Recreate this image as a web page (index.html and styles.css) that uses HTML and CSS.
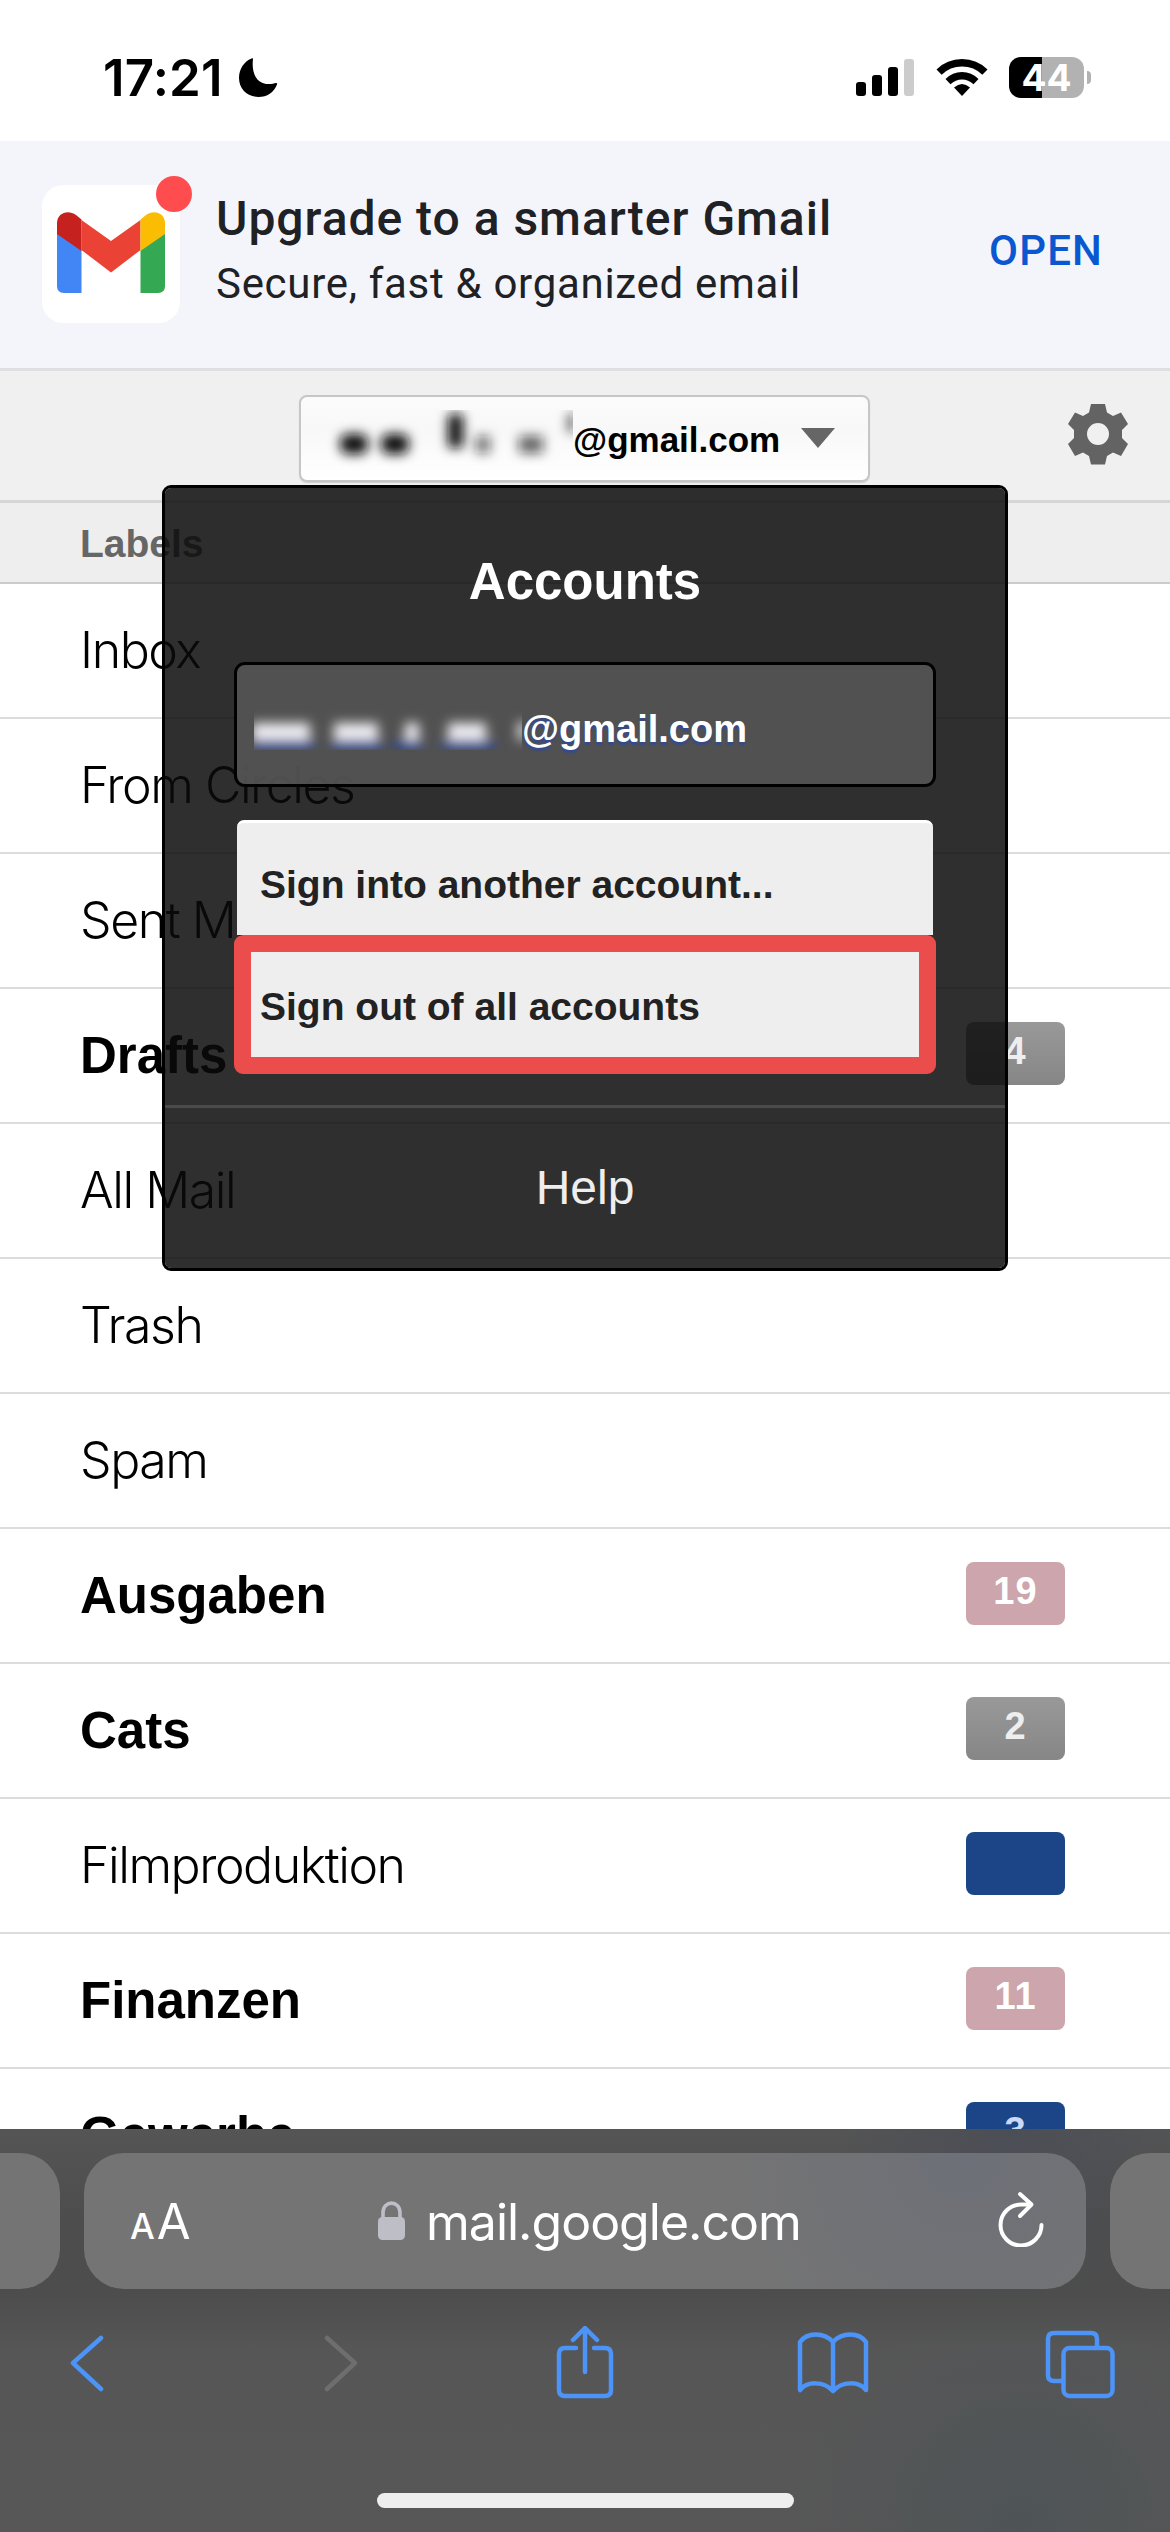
FILE: index.html
```html
<!DOCTYPE html>
<html lang="en">
<head>
<meta charset="utf-8">
<title>Gmail</title>
<link rel="stylesheet" href="styles.css">
</head>
<body>
<div class="screen">
  <header class="status">
    <span class="time">17:21</span>
    <svg class="moon" width="40" height="40" viewBox="0 0 40 40"><path d="M15 1C13.500 13 17 26 31 26C34 26 36 25.500 38 25C39 24.700 39.500 25.400 39 26.500C36 34.500 29 39 20.500 39C9 39 1 30.500 1 20C1 11 6 3.500 13.500 0.400C14.500 0 15.200 0.200 15 1Z"/></svg>
    <svg class="signal" width="58" height="38" viewBox="0 0 58 38"><rect x="0" y="23" width="10" height="14" rx="3"/><rect x="16" y="16" width="10" height="21" rx="3"/><rect x="32" y="8" width="10" height="29" rx="3"/><rect x="48" y="0" width="10" height="37" rx="3" fill="#ccc"/></svg>
    <svg class="wifi" width="52" height="38" viewBox="0 0 52 38"><path d="M26 37L18 28.500Q26 21.500 34 28.500Z"/><path d="M26 13Q35.500 13 42.500 20L37.500 25.200Q32.500 20.500 26 20.500Q19.500 20.500 14.500 25.200L9.500 20Q16.500 13 26 13Z"/><path d="M26 0Q41 0 51.500 10.500L46.300 15.700Q38 7.500 26 7.500Q14 7.500 5.700 15.700L0.500 10.500Q11 0 26 0Z"/></svg>
    <span class="battery">44</span><i class="nub"></i>
  </header>

  <section class="banner">
    <div class="app-icon">
      <svg width="108" height="82" viewBox="0 0 108 82"><path fill="#4285f4" d="M0 20L24.500 38V81H7Q0 81 0 74Z"/><path fill="#34a853" d="M83.500 38L108 20V74Q108 81 101 81H83.500Z"/><path fill="#ea4335" d="M24.500 8L54 29L83.500 8V38L54 60.500L24.500 38Z"/><path fill="#c5221f" d="M0 22V11C0 1 11-3 19 3L24.500 7.500V39Z"/><path fill="#fbbc04" d="M108 22V11C108 1 97-3 89 3L83.500 7.500V39Z"/></svg>
      <i class="dot"></i>
    </div>
    <div class="pitch">
      <div class="pitch-title">Upgrade to a smarter Gmail</div>
      <div class="pitch-sub">Secure, fast &amp; organized email</div>
    </div>
    <div class="open">OPEN</div>
  </section>

  <nav class="toolbar">
    <div class="account-button">
      <svg class="redacted" width="272" height="60" viewBox="0 0 272 60"><defs><filter id="soft" x="-50%" y="-50%" width="200%" height="200%"><feGaussianBlur stdDeviation="6"/></filter></defs><g filter="url(#soft)" fill="#111"><rect x="39" y="24" width="28" height="20" rx="8"/><rect x="80" y="24" width="28" height="20" rx="8"/><rect x="147" y="4" width="15" height="34" rx="4"/><rect x="175" y="26" width="14" height="17" opacity=".6"/><rect x="218" y="26" width="24" height="17" opacity=".65"/><rect x="267" y="4" width="8" height="18" opacity=".7"/></g></svg>
      <span class="domain">@gmail.com</span>
      <svg class="caret" width="34" height="20" viewBox="0 0 34 20"><path fill="#666" d="M0 0H34L17 20Z"/></svg>
    </div>
    <svg class="gear" width="60" height="62" viewBox="0 0 60 62"><path fill="#636363" fill-rule="evenodd" d="M23 1H37L39 9.500L45 13L53 9.500L60 21L54 27V35L60 41L53 53L45 49.500L39 53L37 61.500H23L21 53L15 49.500L7 53L0 41L6 35V27L0 21L7 9.500L15 13L21 9.500ZM30 20A11 11 0 1 0 30 42A11 11 0 1 0 30 20Z"/></svg>
  </nav>

  <main class="labels">
    <h2 class="labels-head">Labels</h2>
    <div class="row">Inbox</div>
    <div class="row">From Circles</div>
    <div class="row">Sent Mail</div>
    <div class="row unread">Drafts<b class="badge gray">4</b></div>
    <div class="row">All Mail</div>
    <div class="row">Trash</div>
    <div class="row">Spam</div>
    <div class="row unread">Ausgaben<b class="badge pink">19</b></div>
    <div class="row unread">Cats<b class="badge gray">2</b></div>
    <div class="row">Filmproduktion<b class="badge blue"></b></div>
    <div class="row unread">Finanzen<b class="badge pink">11</b></div>
    <div class="row unread">Gewerbe<b class="badge blue">3</b></div>
  </main>

  <footer class="browser">
    <div class="tabs">
      <div class="pill prev"></div>
      <div class="pill address">
        <span class="text-size"><small>A</small>A</span>
        <span class="host">
          <svg width="28" height="40" viewBox="0 0 28 40"><rect x="0" y="16" width="27" height="23" rx="4.500" fill="#bebec6"/><path d="M5 18V11.500C5 -1 22 -1 22 11.500V18" fill="none" stroke="#bebec6" stroke-width="3.600"/></svg>
          <span class="host-name">mail.google.com</span>
        </span>
        <svg class="reload" width="46" height="56" viewBox="0 0 46 56"><g fill="none" stroke="#fff" stroke-width="4" stroke-linecap="round" stroke-linejoin="round"><path d="M33 13.500H23A20.500 20.500 0 1 0 43.500 34"/><path d="M22 3L33.500 13.500L22 25"/></g></svg>
      </div>
      <div class="pill next"></div>
    </div>
    <div class="actions">
      <svg class="back" width="34" height="74" viewBox="0 0 34 74"><path d="M31 12L3 37L31 63" /></svg>
      <svg class="forward" width="34" height="74" viewBox="0 0 34 74"><path d="M3 12L31 37L3 63"/></svg>
      <svg class="share" width="58" height="74" viewBox="0 0 58 74"><path d="M20 22H9Q3 22 3 28V64Q3 70 9 70H49Q55 70 55 64V28Q55 22 49 22H38M29 46V3M17 14L29 2L41 14"/></svg>
      <svg class="book" width="74" height="74" viewBox="0 0 74 74"><path d="M37 65C28 55 11 55 4 64V16C11 6 28 6 37 16C46 6 63 6 70 16V64C63 55 46 55 37 65ZM37 16V64"/></svg>
      <svg class="windows" width="70" height="74" viewBox="0 0 70 74"><path d="M17 55H9Q3 55 3 49V13Q3 7 9 7H46Q52 7 52 13V20"/><rect x="18.500" y="22" width="49" height="48" rx="6"/></svg>
    </div>
    <div class="home"></div>
  </footer>

  <div class="popup">
    <h1>Accounts</h1>
    <div class="current">
      <svg class="redacted" width="272" height="60" viewBox="0 0 272 60"><defs><clipPath id="cut"><rect x="4" y="0" width="268" height="44"/></clipPath></defs><g clip-path="url(#cut)"><g filter="url(#soft)"><g fill="#2f4a8f"><rect x="4" y="34" width="60" height="12"/><rect x="82" y="34" width="50" height="12"/><rect x="144" y="34" width="28" height="12"/><rect x="192" y="34" width="52" height="12"/></g><g fill="#eeeef2"><rect x="2" y="17" width="58" height="17"/><rect x="84" y="17" width="44" height="17"/><rect x="155" y="17" width="14" height="17"/><rect x="198" y="17" width="38" height="17"/><rect x="268" y="16" width="8" height="18"/></g></g></g></svg>
      <span class="domain">@gmail.com</span>
    </div>
    <div class="choices">
      <div class="choice">Sign into another account...</div>
      <div class="choice marked">Sign out of all accounts</div>
    </div>
    <div class="help">Help</div>
  </div>
</div>
</body>
</html>
```
FILE: styles.css
```css
* { box-sizing: border-box; }
body { margin: 0; background: #fff; font-family: "Liberation Sans", Arial, sans-serif; color: #000; }
svg { display: block; flex: none; }
h1, h2 { margin: 0; }
.screen { position: relative; width: 1170px; height: 2532px; display: flex; flex-direction: column; overflow: hidden; white-space: nowrap; }

.status { height: 141px; flex: none; display: flex; align-items: flex-start; padding: 57px 0 0 103px; }
.time { width: 135px; margin-top: -10px; font: 600 51px/61px Inter, sans-serif; letter-spacing: 0.2px; }
.moon { margin-top: 1px; }
.signal { margin: 2px 0 0 578px; }
.wifi { margin: 2px 0 0 22px; }
.battery { width: 75px; height: 41px; margin-left: 21px; border-radius: 12px; background: linear-gradient(90deg, #000 33px, #b2b2b2 33px); text-align: center; font: 700 37px/41px Inter, sans-serif; color: #fff; }
.nub { width: 4px; height: 13px; margin: 14px 0 0 3px; border-radius: 0 6px 6px 0; background: #b2b2b2; }

.banner { height: 230px; flex: none; background: #f4f5fb; border-bottom: 3px solid #dfdfe1; display: flex; padding-left: 42px; color: #202124; font-family: Roboto, sans-serif; }
.app-icon { position: relative; width: 138px; height: 138px; margin-top: 44px; padding: 27px 0 0 15px; background: #fff; border-radius: 21px; }
.dot { position: absolute; left: 114px; top: -9px; width: 36px; height: 36px; border-radius: 50%; background: #ff4d4f; }
.pitch { margin-left: 36px; padding-top: 48px; width: 735px; }
.pitch-title { font-size: 48px; line-height: 60px; font-weight: 500; letter-spacing: 0.98px; }
.pitch-sub { font-size: 42px; line-height: 56px; margin-top: 7px; letter-spacing: 0.7px; }
.open { font-size: 42px; line-height: 56px; margin-top: 82px; font-weight: 500; letter-spacing: 1.2px; color: #0b57d0; margin-left: 38px; }

.toolbar { height: 132px; flex: none; background: #f0f0f0; border-bottom: 3px solid #d6d6d6; display: flex; padding: 24px 0 0 299px; }
.account-button { width: 571px; height: 87px; border: 2px solid #c6c6c6; border-radius: 8px; background: linear-gradient(#fbfbfb, #f8f8f8 40%, #fff); display: flex; align-items: flex-start; box-shadow: 0 1px 1px #ccc; }
.account-button .redacted { margin-top: 13px; }
.account-button .domain { width: 228px; font-size: 35px; line-height: 42px; font-weight: 700; margin-top: 22px; }
.caret { margin-top: 31px; }
.gear { margin: 8px 0 0 198px; }

.labels { flex: 1; min-height: 0; overflow: hidden; }
.labels-head { height: 81px; padding: 18px 0 0 80px; background: #eee; border-bottom: 2px solid #ccc; color: #666; font-size: 39px; line-height: 45px; }
.row { height: 135px; display: flex; padding: 0 105px 0 80px; border-bottom: 2px solid #dcdcdc; justify-content: space-between; font: 300 50px/133px Inter, sans-serif; letter-spacing: -1.45px; }
.unread { font: 700 51px/133px "Liberation Sans", Arial, sans-serif; letter-spacing: 0; }
.badge { width: 99px; height: 63px; margin-top: 33px; border-radius: 8px; font: 700 38px/58px "Liberation Sans", Arial, sans-serif; letter-spacing: 1px; text-align: center; }
.gray { background: linear-gradient(#999, #868686); color: #eee; }
.pink { background: #cca6ac; color: #fff; }
.blue { background: #1c4587; color: #c9daf8; }

.browser { height: 403px; flex: none; background: radial-gradient(circle at 1020px 400px, #4e5456, transparent 220px), radial-gradient(circle at 1010px 0, #4c4e56, transparent 180px), linear-gradient(#555, #4d4d4d 90px, #4d4d4d 165px, #565656 220px, #575757); }
.tabs { display: flex; gap: 24px; padding-top: 24px; }
.pill { height: 136px; background: #747474; }
.prev { width: 60px; border-radius: 0 40px 40px 0; }
.next { width: 60px; border-radius: 40px 0 0 40px; }
.address { width: 1002px; border-radius: 40px; display: flex; align-items: flex-start; color: #fff; background: radial-gradient(circle at 880px 0, #6d7078, transparent 240px) #747474; }
.text-size { width: 247px; padding-left: 46px; font: 400 49px/60px Inter, sans-serif; margin-top: 39px; }
.text-size small { font-size: 35px; font-weight: 500; margin-right: 2px; }
.host { display: flex; width: 620px; margin: 48px 0 0 47px; font: 400 50px/60px Inter, sans-serif; letter-spacing: -1px; }
.host-name { margin: -9px 0 0 20px; }
.host, .text-size { flex: none; }
.reload { margin-top: 38px; }
.actions { display: flex; padding: 37px 0 0 70px; }
.actions svg { fill: none; stroke: #4c94f8; stroke-width: 4.500px; stroke-linecap: round; stroke-linejoin: round; }
.actions .forward { margin-left: 220px; stroke: #6e6e6e; }
.actions .share { margin-left: 198px; }
.actions .book { margin-left: 182px; }
.actions .windows { margin-left: 175px; }
.home { width: 417px; height: 15px; margin: 93px 0 0 377px; border-radius: 8px; background: #eee; }

.popup { position: absolute; left: 162px; top: 485px; width: 846px; height: 786px; border: 3px solid #000; border-radius: 9px; background: rgba(10, 10, 10, .85); background-clip: padding-box; color: #fff; }
.popup h1 { height: 174px; padding-top: 64px; text-align: center; font-size: 51px; line-height: 60px; }
.current { width: 702px; height: 125px; margin-left: 69px; border: 3px solid #000; border-radius: 11px; background: rgba(84, 84, 84, .93); display: flex; align-items: flex-start; }
.current .redacted { margin: 41px 0 0 13px; }
.current .domain { font-size: 38px; line-height: 44px; font-weight: 700; margin-top: 42px; text-shadow: 0 3px 2px #334a90; }
.choices { width: 702px; margin: 33px 0 0 69px; color: #222; font-size: 39px; line-height: 45px; font-weight: 700; }
.choice { width: 696px; height: 115px; margin: 0 auto; padding: 39px 0 0 23px; background: #eee; border-top: 3px solid #fff; border-radius: 7px 7px 0 0; }
.choice.marked { width: 702px; height: 139px; padding: 32px 0 0 9px; border: 17px solid #ea4d4b; border-radius: 9px; }
.help { margin-top: 31px; border-top: 3px solid #4a4a4a; padding-top: 51px; text-align: center; font-size: 48px; line-height: 58px; color: #eee; }
```
